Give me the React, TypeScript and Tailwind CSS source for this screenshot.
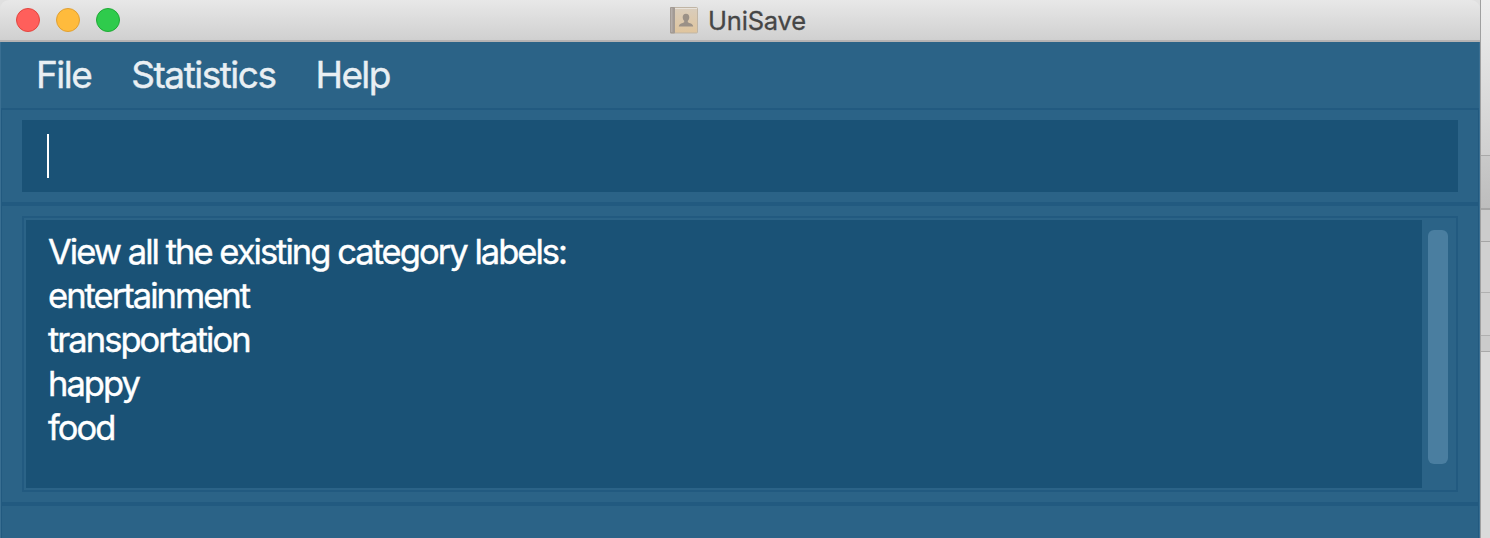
import React from "react";

const labels = [
  "View all the existing category labels:",
  "entertainment",
  "transportation",
  "happy",
  "food",
];

function BookIcon() {
  return (
    <svg width="28" height="27" viewBox="0 0 28 27" className="shrink-0">
      <defs>
        <linearGradient id="cover" x1="0" y1="0" x2="0" y2="1">
          <stop offset="0" stopColor="#d9cdbd" />
          <stop offset="1" stopColor="#e0c59d" />
        </linearGradient>
      </defs>
      <rect x="0.5" y="0.5" width="27" height="25.5" rx="1" fill="url(#cover)" stroke="#c0b5a5" />
      <rect x="0" y="0" width="5" height="26.5" rx="1" fill="#a39b95" />
      <rect x="1" y="1" width="1.5" height="24" fill="#b5aeaa" />
      <path d="M5 1.5H27" stroke="#e8e2da" />
      <path
        d="M16 6.8c-2.2 0-3.4 1.5-3.3 3.6.1 1.5.7 2.6 1.5 3.3v1.5c-1.3 1-5.2 1-5.4 4.3h14.4c-.2-3.3-4.1-3.3-5.4-4.3v-1.5c.8-.7 1.4-1.8 1.5-3.3.1-2.1-1.1-3.6-3.3-3.6z"
        fill="#9b9187"
      />
    </svg>
  );
}

function TitleBar() {
  return (
    <header className="grid h-[42px] shrink-0 grid-cols-[1fr_auto_1fr] items-center rounded-t-[9px] border-b-2 border-[#b5b3b3] bg-gradient-to-b from-[#e8e8e8] to-[#d0d0d0]">
      <div className="flex gap-4 pl-4">
        <span className="size-6 rounded-full border border-[#e2463f] bg-[#ff5f5b]" />
        <span className="size-6 rounded-full border border-[#e0a033] bg-[#ffbb3c]" />
        <span className="size-6 rounded-full border border-[#1faa35] bg-[#2fcb4c]" />
      </div>
      <div className="flex items-center gap-[10px] pr-[4px]">
        <BookIcon />
        <span className="pt-px text-[25.5px] leading-8 tracking-[-0.2px] text-[#464646] [-webkit-text-stroke:0.3px]">UniSave</span>
      </div>
    </header>
  );
}

export default function App() {
  return (
    <div className="flex h-[538px] w-[1490px] overflow-hidden bg-[#e0e0e0] font-['Inter','Liberation_Sans',sans-serif]">
      <main className="flex w-[1480px] shrink-0 flex-col">
        <TitleBar />
        <div className="flex grow flex-col border-x border-[#3a6f92] bg-[#2b6387]">
          <nav className="flex h-[66px] shrink-0 items-center gap-[40px] pl-[35px] text-[37px] text-[#e9eff3] [-webkit-text-stroke:0.4px]">
            <span className="tracking-[-1.5px]">File</span>
            <span className="tracking-[-1.5px]">Statistics</span>
            <span className="tracking-[-1.6px]">Help</span>
          </nav>
          <div className="flex grow flex-col border-x border-[#225a80]">
            <section className="h-[98px] shrink-0 border-t-2 border-b-4 border-[#225a80] px-5 py-[10px]">
              <div className="flex h-[72px] items-center bg-[#1a5276] pl-[25px]">
                <span className="h-11 w-[2px] bg-white" />
              </div>
            </section>
            <section className="h-[300px] shrink-0 border-b-4 border-[#225a80] px-5 py-[10px]">
              <div className="flex h-[276px] gap-[6px] border-2 border-[#225a80] p-[2px]">
                <div className="w-[1396px] bg-[#1a5276] pt-[10px] pl-[22px] text-[34.5px] leading-[44px] tracking-[-1.97px] text-white [-webkit-text-stroke:0.4px]">
                  {labels.map((label) => (
                    <p key={label}>{label}</p>
                  ))}
                </div>
                <div className="mt-[10px] h-[234px] w-5 rounded-[6px] bg-[#4a7ea0]" />
              </div>
            </section>
          </div>
        </div>
      </main>
      <aside className="flex grow flex-col border-l border-[#a0a0a0] bg-[#dadada]">
        <div className="h-[156px] border-b border-[#a9a9a9] bg-gradient-to-b from-[#eeeeee] to-[#cfcfcf]" />
        <div className="h-[54px] border-b-2 border-[#a5a5a5] bg-gradient-to-b from-[#c9c9c9] to-[#bdbdbd]" />
        <div className="h-[32px] border-b border-[#a5a5a5] bg-[#cccccc]" />
        <div className="h-[51px] border-b border-[#b0b0b0] bg-[#d0d0d0]" />
        <div className="h-[43px] border-b border-[#b0b0b0] bg-[#d0d0d0]" />
        <div className="h-[16px] border-b border-[#a9a9a9] bg-[#cbcbcb]" />
      </aside>
    </div>
  );
}
